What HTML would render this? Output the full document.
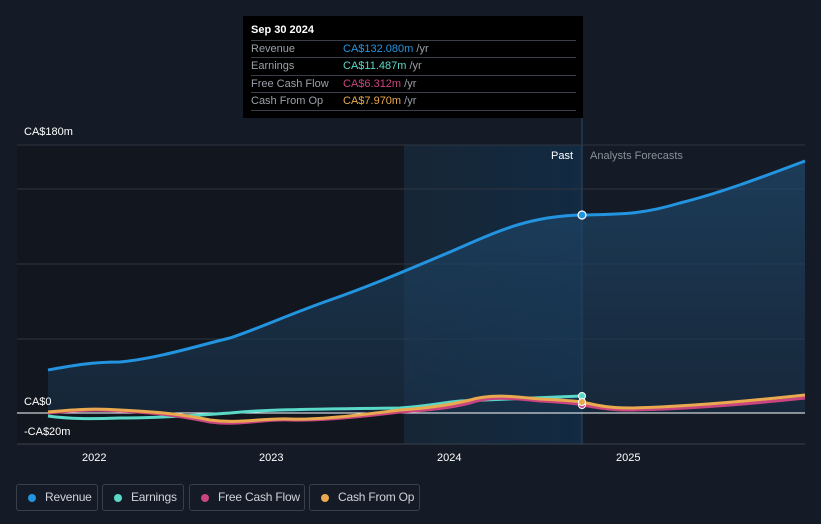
<!DOCTYPE html>
<html><head><style>
body{margin:0;width:821px;height:524px;background:#151b26;font-family:"Liberation Sans",sans-serif;overflow:hidden;position:relative}
.tt{position:absolute;left:243px;top:16px;width:340px;height:102px;background:#000;color:#fff;font-size:11px}
.tt .h{position:absolute;left:8px;top:8px;font-weight:bold}
.row{position:absolute;left:8px;width:325px;height:17px;border-top:1px solid #3a3f47;line-height:17px;color:#9aa0a8}
.row span.v{position:absolute;left:92px}
.lg{position:absolute;top:484px;height:27px;border:1px solid #3a404b;border-radius:3px;color:#cfd3d9;font-size:12px;line-height:25px;box-sizing:border-box;padding-left:33px;white-space:nowrap;letter-spacing:-0.2px}
.lg i{position:absolute;left:11px;top:9px;width:8px;height:8px;border-radius:50%}
.ax{position:absolute;color:#fff;font-size:11px}
</style></head><body>
<svg width="821" height="524" style="position:absolute;left:0;top:0">
<defs>
<linearGradient id="pg" x1="0" x2="1"><stop offset="0" stop-color="#172636"/><stop offset="1" stop-color="#122a42"/></linearGradient>
<linearGradient id="rf" x1="0" y1="0" x2="0" y2="1"><stop offset="0" stop-color="#1f4a6e" stop-opacity=".7"/><stop offset="1" stop-color="#1a3550" stop-opacity=".5"/></linearGradient>
</defs>
<rect x="17" y="145" width="387" height="299" fill="#12171f"/>
<rect x="404" y="145" width="178" height="299" fill="url(#pg)"/>
<line x1="582" y1="118" x2="582" y2="444" stroke="#2c4a66" stroke-width="1"/>
<g stroke="#2f3540" stroke-width="1">
<line x1="17" y1="145" x2="805" y2="145"/><line x1="17" y1="189" x2="805" y2="189"/>
<line x1="17" y1="264" x2="805" y2="264"/><line x1="17" y1="339" x2="805" y2="339"/>
</g>
<path d="M48,370 C70,366 90,362 120,362 C160,358 200,345 230,338 C260,328 290,314 330,300 C370,286 400,273 450,252 C500,230 530,216 582,215 C620,214 640,215 680,203 C720,193 760,178 805,161 L805,413 L48,413 Z" fill="url(#rf)"/>
<path d="M48,370 C70,366 90,362 120,362 C160,358 200,345 230,338 C260,328 290,314 330,300 C370,286 400,273 450,252 C500,230 530,216 582,215 C620,214 640,215 680,203 C720,193 760,178 805,161" fill="none" stroke="#2394e0" stroke-width="3"/>
<line x1="17" y1="444" x2="805" y2="444" stroke="#3a404b"/>
<line x1="17" y1="413" x2="805" y2="413" stroke="#fff" stroke-width="1"/>
<path d="M48,416 C70,419 90,419 120,418 C160,418 200,415 230,413 C260,410 300,409 400,408 C430,406 440,403 460,401 C500,399 540,398 582,396" fill="none" stroke="#5ad8c8" stroke-width="3"/>
<path d="M48,413 C70,411 90,409 120,411 C160,413 180,416 210,422 C240,426 260,419 290,420 C320,421 360,417 400,412 C430,410 450,408 470,403 C490,396 510,398 540,401 C560,402 575,403 582,405 C600,408 610,410 630,410 C680,409 740,405 805,398" fill="none" stroke="#c8457f" stroke-width="3"/>
<path d="M48,412 C70,410 90,408 120,410 C160,412 180,414 210,420 C240,424 260,418 290,419 C320,420 360,415 400,410 C430,408 450,405 470,400 C490,394 510,396 540,399 C560,400 575,401 582,402 C600,406 610,408 630,408 C680,407 740,402 805,395" fill="none" stroke="#e9a94e" stroke-width="3"/>
<circle cx="582" cy="215" r="4" fill="#2394e0" stroke="#fff" stroke-width="1.2"/>
<circle cx="582" cy="396" r="3.5" fill="#5ad8c8" stroke="#fff"/>
<circle cx="582" cy="405" r="3.5" fill="#c8457f" stroke="#fff"/>
<circle cx="582" cy="402" r="3.5" fill="#e9a94e" stroke="#fff"/>
</svg>
<div class="tt"><div class="h">Sep 30 2024</div>
<div class="row" style="top:24px">Revenue<span class="v"><span style="color:#2394e0">CA$132.080m</span> /yr</span></div>
<div class="row" style="top:41px">Earnings<span class="v"><span style="color:#5ad8c8">CA$11.487m</span> /yr</span></div>
<div class="row" style="top:59px">Free Cash Flow<span class="v"><span style="color:#c8457f">CA$6.312m</span> /yr</span></div>
<div class="row" style="top:76px;border-bottom:1px solid #3a3f47">Cash From Op<span class="v"><span style="color:#e9a94e">CA$7.970m</span> /yr</span></div>
</div>
<div class="ax" style="left:24px;top:126px">CA$180m</div>
<div class="ax" style="left:24px;top:396px">CA$0</div>
<div class="ax" style="left:24px;top:426px">-CA$20m</div>
<div class="ax" style="left:551px;top:150px">Past</div>
<div class="ax" style="left:590px;top:150px;color:#8a9099">Analysts Forecasts</div>
<div class="ax" style="left:82px;top:452px">2022</div>
<div class="ax" style="left:259px;top:452px">2023</div>
<div class="ax" style="left:437px;top:452px">2024</div>
<div class="ax" style="left:616px;top:452px">2025</div>
<div class="lg" style="left:16px;width:82px;padding-left:28px"><i style="background:#2394e0"></i>Revenue</div>
<div class="lg" style="left:102px;width:82px;padding-left:28px"><i style="background:#5ad8c8"></i>Earnings</div>
<div class="lg" style="left:189px;width:116px;padding-left:28px"><i style="background:#c8457f"></i>Free Cash Flow</div>
<div class="lg" style="left:309px;width:111px;padding-left:28px"><i style="background:#e9a94e"></i>Cash From Op</div>
</body></html>
